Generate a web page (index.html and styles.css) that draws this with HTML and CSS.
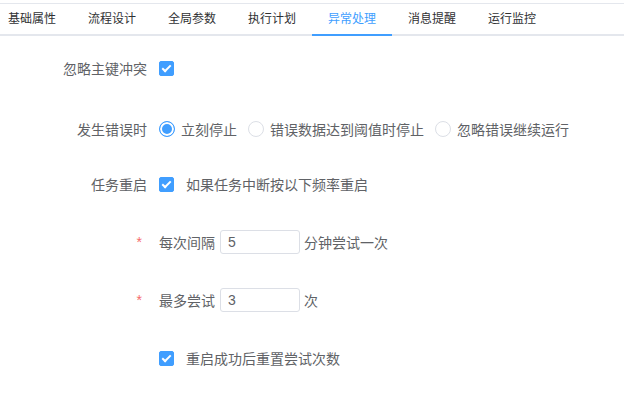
FILE: index.html
```html
<!DOCTYPE html>
<html lang="zh-CN">
<head>
    <meta charset="UTF-8">
    <meta name="viewport" content="width=device-width, initial-scale=1.0">
    <title>异常处理</title>
    <link rel="stylesheet" href="styles.css">
</head>
<body>

    <div class="tabs">
        <div class="tab-nav">
            <div class="tab">基础属性</div>
            <div class="tab">流程设计</div>
            <div class="tab">全局参数</div>
            <div class="tab">执行计划</div>
            <div class="tab active">异常处理</div>
            <div class="tab">消息提醒</div>
            <div class="tab">运行监控</div>
        </div>
    </div>

    <div class="form">
        <div class="form-item item-first">
            <div class="form-label">忽略主键冲突</div>
            <div class="form-content">
                <span class="checkbox checked"></span>
            </div>
        </div>

        <div class="form-item item-radio">
            <div class="form-label">发生错误时</div>
            <div class="form-content">
                <label class="radio checked"><span class="radio-dot"></span>立刻停止</label>
                <label class="radio"><span class="radio-dot"></span>错误数据达到阈值时停止</label>
                <label class="radio"><span class="radio-dot"></span>忽略错误继续运行</label>
            </div>
        </div>

        <div class="form-item">
            <div class="form-label">任务重启</div>
            <div class="form-content">
                <label class="check-label"><span class="checkbox checked"></span>如果任务中断按以下频率重启</label>
            </div>
        </div>

        <div class="form-item">
            <div class="form-label required">*</div>
            <div class="form-content">
                <span class="inline-text">每次间隔</span>
                <input class="input" type="text" value="5">
                <span class="inline-text">分钟尝试一次</span>
            </div>
        </div>

        <div class="form-item">
            <div class="form-label required">*</div>
            <div class="form-content">
                <span class="inline-text">最多尝试</span>
                <input class="input" type="text" value="3">
                <span class="inline-text">次</span>
            </div>
        </div>

        <div class="form-item">
            <div class="form-label"></div>
            <div class="form-content">
                <label class="check-label"><span class="checkbox checked"></span>重启成功后重置尝试次数</label>
            </div>
        </div>
    </div>

</body>
</html>
```

FILE: styles.css
```css
body {
    margin: 0;
    padding: 0;
    font-family: "Liberation Sans", "Noto Sans CJK SC", sans-serif;
    font-size: 14px;
    color: #606266;
    background: #fff;
}
.tabs {
    margin-top: 3px;
    border-top: 1px solid #e4e7ed;
}
.tab-nav {
    display: flex;
    padding-left: 8px;
    border-bottom: 2px solid #e4e7ed;
}
.tab {
    height: 30px;
    line-height: 30px;
    padding: 0 16px;
    font-size: 12px;
    color: #303133;
    margin-bottom: -2px;
    border-bottom: 2px solid transparent;
}
.tab:first-child {
    padding-left: 0;
}
.tab.active {
    color: #409eff;
    border-bottom-color: #409eff;
}
.form {
    padding-top: 12px;
}
.form-item {
    display: flex;
    align-items: center;
    height: 40px;
    margin-bottom: 18px;
}
.item-first {
    margin-bottom: 21px;
}
.item-radio {
    margin-bottom: 15px;
}
.form-label {
    width: 147px;
    padding-right: 12px;
    text-align: right;
    color: #606266;
}
.form-label.required {
    color: #f56c6c;
    padding-right: 17px;
    width: 142px;
}
.form-content {
    display: flex;
    align-items: center;
}
.checkbox {
    position: relative;
    display: inline-block;
    box-sizing: border-box;
    width: 15px;
    height: 15px;
    border: 1px solid #dcdfe6;
    border-radius: 2px;
    background: #fff;
}
.checkbox.checked {
    background: #409eff;
    border-color: #409eff;
}
.checkbox.checked::after {
    content: "";
    position: absolute;
    left: 4px;
    top: 1px;
    width: 3px;
    height: 7px;
    border: 2px solid #fff;
    border-top: 0;
    border-left: 0;
    transform: rotate(45deg);
}
.check-label {
    display: flex;
    align-items: center;
}
.check-label .checkbox {
    margin-right: 12px;
}
.radio {
    display: flex;
    align-items: center;
    margin-right: 11px;
}
.radio-dot {
    display: inline-block;
    box-sizing: border-box;
    width: 16px;
    height: 16px;
    border: 1px solid #dcdfe6;
    border-radius: 50%;
    margin-right: 6px;
    background: #fff;
}
.radio.checked .radio-dot {
    border-color: #409eff;
    background: #409eff;
    box-shadow: inset 0 0 0 2px #fff;
}
.inline-text {
    color: #606266;
}
.input {
    box-sizing: border-box;
    width: 80px;
    height: 24px;
    margin: 0 4px 0 5px;
    padding: 0 7px;
    border: 1px solid #dcdfe6;
    border-radius: 3px;
    font-family: inherit;
    font-size: 14px;
    color: #606266;
    outline: none;
}
```
